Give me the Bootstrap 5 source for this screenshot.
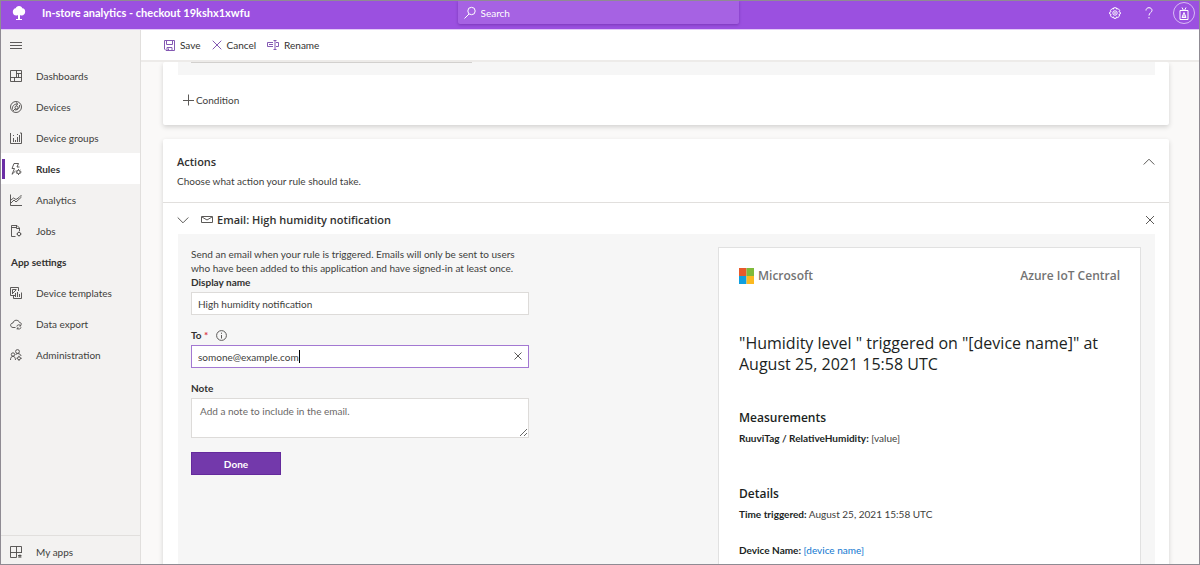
<!DOCTYPE html>
<html lang="en">
<head>
<meta charset="utf-8">
<meta name="viewport" content="width=device-width, initial-scale=1">
<title>In-store analytics - Rules</title>
<link href="https://cdn.jsdelivr.net/npm/bootstrap@5.3.0/dist/css/bootstrap.min.css" rel="stylesheet">
<style>
:root{--brand:#9b50e0;--accent:#7339ab;--ink:#323130;--line:#e1dfdd}
body{font-family:Lato,"Open Sans",sans-serif;font-size:10px;line-height:14px;color:#403e3c;background:#faf9f8}
svg{display:block;flex:none;fill:none;stroke:currentColor;stroke-width:1}
button{color:inherit}
.shell{border:1px solid #8f8b93}
.topbar{height:29px;background:var(--brand);border-bottom:1px solid #e3c9f7;color:#fff}
.topbar .side-col{flex:1 1 0;padding-bottom:4px}
.app-title{font-size:11px;font-weight:700;margin-left:13px}
.search-box{width:281px;height:23px;background:#a662e3;border-radius:0 0 2px 2px;box-shadow:0 1px 3px rgba(60,10,110,.35);padding:0 5px;gap:4px}
.search-box input{font-size:10px;line-height:14px;color:#fff}
.search-box input::placeholder{color:#fff;opacity:1}
.help-btn{margin:0 20px 0 24px}
.avatar{width:22px;height:22px;border:1px solid #d9b9f5;border-radius:50%}
.sidebar{width:140px;background:#f3f2f1;border-right:1px solid var(--line);color:var(--ink)}
.sidebar svg{stroke-width:.9;color:#4c4a48}
.side-item{height:31px;padding-left:9px;gap:14px;color:#403e3c;text-decoration:none}
.side-item.current{background:#fff linear-gradient(#6b2fa5,#6b2fa5) 1px 6px/3px 20px no-repeat;font-weight:700;color:var(--ink)}
.side-head{height:31px;padding-left:10px;font-weight:700}
.menu-btn{height:30px}
.side-foot{border-top:1px solid var(--line)}
.side-foot .side-item{height:28px;padding-top:3px}
.commands{height:32px;background:#fff;border-bottom:2px solid #edebe9;padding-left:23px;gap:11px}
.commands svg{color:#8459b3}
.commands button{gap:5px;color:var(--ink)}
.scroller{padding:0 30px 0 22px}
.scroller svg{color:#5c5a58}
.panel-card{background:#fff;border-radius:2px;box-shadow:0 2px 5px rgba(0,0,0,.16)}
.panel-gray{background:#f6f6f6}
.cond-card{height:63px;margin-bottom:14px;padding:0 14px 0 15px}
.cond-tail{height:13px;padding-left:13px}
.cond-line{width:281px;height:1px;background:#d2d0ce}
.cond-btn{margin-top:18px;margin-left:4px;gap:2px}
.sec-head{height:64px;padding:15px 14px 0;border-bottom:1px solid var(--line)}
.sec-title,.brand-row,.subject,.mail-head{font-family:"Open Sans",sans-serif}
.sec-title{font-size:11px;line-height:16px;font-weight:600;color:var(--ink);margin:0}
.act-row{height:31px;padding:2px 14px 0}
.act-body{margin:0 14px 0 15px;padding:13px 14px 0 13px}
.rule-form{width:338px}
.rule-form label,.lbl-row{line-height:14px;color:var(--ink);font-weight:700}
.rule-form .form-control{font-size:10px;line-height:14px;height:23px;padding:0 6px;border:1px solid #dddbd9;border-radius:0;color:#403e3c;box-shadow:none;background:#fff}
.rule-form .form-control.active-field{border-color:#a378d2}
.rule-form textarea.form-control{height:40px;min-height:0;padding:5px 8px}
.rule-form textarea::placeholder{color:#6b6967}
.field{margin-top:13px}
.gap-label{margin-bottom:3px}
.clear-btn{right:6px;top:6px}
.caret{left:108px;top:5px;width:1px;height:13px;background:#000}
.done-btn{width:90px;height:23px;margin-top:14px;font-size:10px;font-weight:700;line-height:14px;padding:0;border-radius:0;background:var(--accent);border:1px solid #642a9c;color:#fff}
.preview{width:423px;background:#fff;border:1px solid #e1e1e1;padding:20px;color:#201f1e}
.brand-row{height:16px;color:#737373;font-size:12px;font-weight:600}
.subject{font-size:16px;line-height:21px;font-weight:400;margin:49px 0 0}
.mail-head{font-size:12px;line-height:18px;font-weight:600;margin:34px 0 4px}
.mail-head.second{margin-top:40px}
.mail-line{margin:0 0 22px}
.preview b{font-weight:700}
.preview .value{color:#403e3c}
.preview a{color:#0f78d0;text-decoration:none}
</style>
</head>
<body>
<div class="shell vh-100 d-flex flex-column overflow-hidden">
<header class="topbar d-flex flex-shrink-0">
  <div class="side-col d-flex align-items-center">
    <svg class="ms-2" width="20" height="18" viewBox="0 0 20 18" style="fill:#fff;stroke:none"><path d="M10 2c2 0 3 1 3.300 2.300C15.200 4.400 16.300 6 16.200 7.800c0 2-1.500 3.700-3.500 3.700-.7 0-1-.1-1.700-.5V15h2v1H7v-1h2v-4c-.6.400-1.100.5-1.800.5C5 11.500 3.800 9.800 3.800 8c0-2 1.200-3.600 2.900-3.700C7 3 8.200 2 10 2z"/></svg>
    <span class="app-title text-nowrap">In-store analytics - checkout 19kshx1xwfu</span>
  </div>
  <div class="search-box d-flex align-items-center">
    <svg width="14" height="14" viewBox="0 0 14 14"><circle cx="8.500" cy="5" r="3.700"/><path d="M6 8l-4.500 4.500"/></svg>
    <input class="border-0 bg-transparent p-0 flex-fill" type="search" placeholder="Search" aria-label="Search">
  </div>
  <div class="side-col d-flex align-items-center justify-content-end pe-1">
    <button class="btn p-0 border-0 text-white" aria-label="Settings"><svg width="12" height="12" viewBox="0 0 12 12"><path d="M4.700.8h2.600l.4 1.300 1.400-.5 1.600 1.800-.8 1.200 1.400.7v1.700l-1.400.6.7 1.400-1.700 1.500-1.300-.6-.5 1.400H4.900L4.500 9.900l-1.400.6-1.600-1.600.6-1.400-1.400-.5V5.200l1.400-.6-.6-1.300 1.600-1.700 1.300.5z"/><circle cx="6" cy="6" r="2.200"/><circle cx="6" cy="6" r=".5"/></svg></button>
    <button class="btn p-0 border-0 text-white help-btn" aria-label="Help"><svg width="8" height="12" viewBox="0 0 8 12"><path d="M1 3.500C1 1.700 2.300.7 4 .7s3 1.100 3 2.700C7 5.600 4 5.700 4 8.500M4 10v1.400"/></svg></button>
    <button class="btn avatar p-0 d-flex align-items-center justify-content-center text-white" aria-label="Account"><svg width="10" height="13" viewBox="0 0 10 13"><path d="M1 3.500h8v9H1zM3 .5l1.500 3M7 .5L5.500 3.500M3 10.500l2-5 2 5M3.500 9h3M3 10.500h4"/></svg></button>
  </div>
</header>
<div class="d-flex flex-fill overflow-hidden">
  <nav class="sidebar d-flex flex-column flex-shrink-0" aria-label="Main">
    <button class="menu-btn btn border-0 p-0 ps-2 d-flex align-items-center" aria-label="Menu"><svg width="14" height="12" viewBox="0 0 14 12"><path d="M1 3.500h12M1 6.500h12M1 9.500h12"/></svg></button>
    <a class="side-item d-flex align-items-center" href="#"><svg width="12" height="12" viewBox="0 0 12 12"><path d="M.5.5h11v11H.5zM6.500.5v7M.5 7.500h11M6.500 3.500h5M8.500 3.500v4M4.500 7.500v4"/></svg>Dashboards</a>
    <a class="side-item d-flex align-items-center" href="#"><svg width="12" height="12" viewBox="0 0 12 12"><circle cx="6" cy="6" r="5.500"/><path d="M2.500 8.500C2 5 4 3 7.500 3M6 1.500L7.800 3 6 4.600M9.500 4c.4 3-1.500 5-4.500 5"/><circle cx="6.500" cy="6.500" r="1.500"/><path d="M5.400 7.600L3 10"/></svg>Devices</a>
    <a class="side-item d-flex align-items-center" href="#"><svg width="12" height="12" viewBox="0 0 12 12"><path d="M.5 1v10.500h11V1H10M3.500 6v4M5.500 8v2M7.500 5v5M9.500 3v7M3 3.500h1M7 2.500h1"/></svg>Device groups</a>
    <a class="side-item current d-flex align-items-center" href="#" aria-current="page"><svg width="12" height="12" viewBox="0 0 12 12"><path d="M4 .5h4.500L7 4h2.500M4 .5L2 5.500h2.500L2 11.300 5.500 8"/><circle cx="8.500" cy="9" r="1.700"/><path d="M8.500 6v1.200M8.500 10.800V12M5.800 9H7M10 9h1.500M6.500 7l.8.8M10.500 7l-.8.8M6.500 11l.8-.8M10.500 11l-.8-.8"/></svg>Rules</a>
    <a class="side-item d-flex align-items-center" href="#"><svg width="12" height="12" viewBox="0 0 12 12"><path d="M.5.5v11H12M1 9l3-3 2 2 5.500-5M1 6l2.500-2L6 5.500l3-2L11.500 1"/></svg>Analytics</a>
    <a class="side-item d-flex align-items-center" href="#"><svg width="12" height="12" viewBox="0 0 12 12"><path d="M5.500 11.500h-4V.5H7L9.500 3v3M6.500.5v3h3M1.500 2.500h5"/><circle cx="9" cy="9" r="1.700"/><path d="M9 6.500v.8M9 10.700v.8M6.500 9h.8M10.700 9h.8"/></svg>Jobs</a>
    <div class="side-head d-flex align-items-center">App settings</div>
    <a class="side-item d-flex align-items-center" href="#"><svg width="12" height="12" viewBox="0 0 12 12"><path d="M8.500 4V.5h-8v8H5M2.500 6.500v-4h4M2 7l4-4M3.500 8.500v3h8V5.500M5.500 6v4M7.500 5v5M9.500 7v3"/></svg>Device templates</a>
    <a class="side-item d-flex align-items-center" href="#"><svg width="12" height="12" viewBox="0 0 12 12"><path d="M5.500 9.500H3C-.3 9.300 0 5 3 5c.6-3.500 5.500-3.700 6.500-.5 1.200 0 2 .9 2 2"/><path d="M6.800 8.500A2 2 0 0 1 10.500 7.800M10.700 6.500v1.500H9.300M11 9.300A2 2 0 0 1 7.400 10.200M7.200 11.500V10h1.400"/></svg>Data export</a>
    <a class="side-item d-flex align-items-center" href="#"><svg width="12" height="12" viewBox="0 0 12 12"><circle cx="7.500" cy="2.500" r="1.900"/><circle cx="3" cy="5.500" r="1.700"/><path d="M.5 11c0-2.500 1-3.700 2.500-3.700S5.300 8.500 5.500 11M5.500 6C6 5 7 4.500 8 4.600c1.700.1 2.800.9 3 2.400"/><circle cx="9" cy="9.300" r="1.500"/><path d="M9 6.800v1M9 10.800v1M6.500 9.300h1M10.500 9.300h1.300"/></svg>Administration</a>
    <div class="side-foot mt-auto"><a class="side-item d-flex align-items-center" href="#"><svg width="12" height="12" viewBox="0 0 12 12"><path d="M11.500 7V.5H.5v11h6M6.500.5v11M.5 6.500h11"/><path d="M8 9.500h3.500M8 11h3.500M10 8.500v3"/></svg>My apps</a></div>
  </nav>
  <main class="flex-fill d-flex flex-column overflow-hidden">
    <div class="commands d-flex align-items-center flex-shrink-0" role="toolbar">
      <button class="border-0 bg-transparent p-0 d-flex align-items-center"><svg width="11" height="11" viewBox="0 0 11 11"><path d="M.5.500h10v10H2L.5 9zM2.500.5v4h6v-4M3 10.500v-3h5v3M4.500 8.500v2"/></svg>Save</button>
      <button class="border-0 bg-transparent p-0 d-flex align-items-center"><svg width="10" height="10" viewBox="0 0 10 10"><path d="M.7.700l8.600 8.600M9.300.7L.7 9.300"/></svg>Cancel</button>
      <button class="border-0 bg-transparent p-0 d-flex align-items-center"><svg width="12" height="10" viewBox="0 0 12 10"><path d="M6 2.500H.5v4H6M2 4.500h4M8 .5v9M6.500.5h3M6.500 9.500h3M9 2.500h2.500v4H9"/></svg>Rename</button>
    </div>
    <div class="scroller flex-fill overflow-hidden d-flex flex-column">
      <section class="panel-card cond-card flex-shrink-0">
        <div class="panel-gray cond-tail"><div class="cond-line"></div></div>
        <button class="cond-btn border-0 bg-transparent p-0 d-flex align-items-center"><svg width="12" height="12" viewBox="0 0 12 12"><path d="M6.500.5v11M1 6.500h11"/></svg>Condition</button>
      </section>
      <section class="panel-card flex-fill">
        <div class="sec-head d-flex justify-content-between align-items-start">
          <div><h2 class="sec-title">Actions</h2><p class="mb-0 mt-1">Choose what action your rule should take.</p></div>
          <button class="border-0 bg-transparent p-0 pt-1" aria-label="Collapse"><svg width="12" height="8" viewBox="0 0 12 8"><path d="M.7 6.500L6 1.200l5.300 5.300"/></svg></button>
        </div>
        <div class="act-row d-flex align-items-center">
          <button class="border-0 bg-transparent p-0 me-2" aria-label="Toggle action"><svg width="12" height="8" viewBox="0 0 12 8"><path d="M.7 1.500L6 6.800l5.300-5.300"/></svg></button>
          <svg class="ms-1 me-1" width="12" height="8" viewBox="0 0 12 8"><path d="M.5.500h11v6H.5zM1 1l5 3 5-3"/></svg>
          <h3 class="sec-title">Email: High humidity notification</h3>
          <button class="border-0 bg-transparent p-0 ms-auto" aria-label="Remove action"><svg width="10" height="10" viewBox="0 0 10 10"><path d="M1 1l8 8M9 1L1 9"/></svg></button>
        </div>
        <div class="panel-gray act-body d-flex justify-content-between align-items-start">
          <form class="rule-form">
            <p class="mb-0">Send an email when your rule is triggered. Emails will only be sent to users who have been added to this application and have signed-in at least once.</p>
            <label class="d-block gap-label" for="dn">Display name</label>
            <input class="form-control" id="dn" type="text" value="High humidity notification">
            <div class="field">
              <div class="lbl-row d-flex align-items-center gap-1 gap-label"><label for="to">To <span class="text-danger">*</span></label><svg class="ms-1" width="11" height="11" viewBox="0 0 11 11"><circle cx="5.500" cy="5.500" r="4.900"/><path d="M5.500 5v3.500M5.500 2.700v1.100"/></svg></div>
              <div class="position-relative">
                <input class="form-control active-field" id="to" type="text" value="somone@example.com">
                <span class="caret position-absolute"></span>
                <button class="clear-btn position-absolute border-0 bg-transparent p-0" type="button" aria-label="Clear"><svg width="10" height="10" viewBox="0 0 10 10"><path d="M1.500 1.500l7 7M8.500 1.500l-7 7"/></svg></button>
              </div>
            </div>
            <div class="field">
              <label class="d-block gap-label" for="note">Note</label>
              <textarea class="form-control" id="note" placeholder="Add a note to include in the email."></textarea>
            </div>
            <button class="btn done-btn d-block" type="button">Done</button>
          </form>
          <article class="preview">
            <div class="brand-row d-flex align-items-center">
              <svg class="me-1" width="15" height="16" viewBox="0 0 15 16" style="stroke:none"><path fill="#e8592b" d="M0 0h7.500v8H0z"/><path fill="#7fba3a" d="M7.500 0H15v8H7.500z"/><path fill="#0f9fdf" d="M0 8h7.500v8H0z"/><path fill="#fbb920" d="M7.500 8H15v8H7.500z"/></svg>
              <span>Microsoft</span><span class="ms-auto">Azure IoT Central</span>
            </div>
            <h1 class="subject">"Humidity level " triggered on "[device name]" at August 25, 2021 15:58 UTC</h1>
            <h4 class="mail-head">Measurements</h4>
            <p class="mail-line mb-0"><b>RuuviTag / RelativeHumidity:</b> <span class="value">[value]</span></p>
            <h4 class="mail-head second">Details</h4>
            <p class="mail-line"><b>Time triggered:</b> <span class="value">August 25, 2021 15:58 UTC</span></p>
            <p class="mail-line"><b>Device Name:</b> <a href="#">[device name]</a></p>
          </article>
        </div>
      </section>
    </div>
  </main>
</div>
</div>
<script src="https://cdn.jsdelivr.net/npm/bootstrap@5.3.0/dist/js/bootstrap.bundle.min.js"></script>
</body>
</html>
